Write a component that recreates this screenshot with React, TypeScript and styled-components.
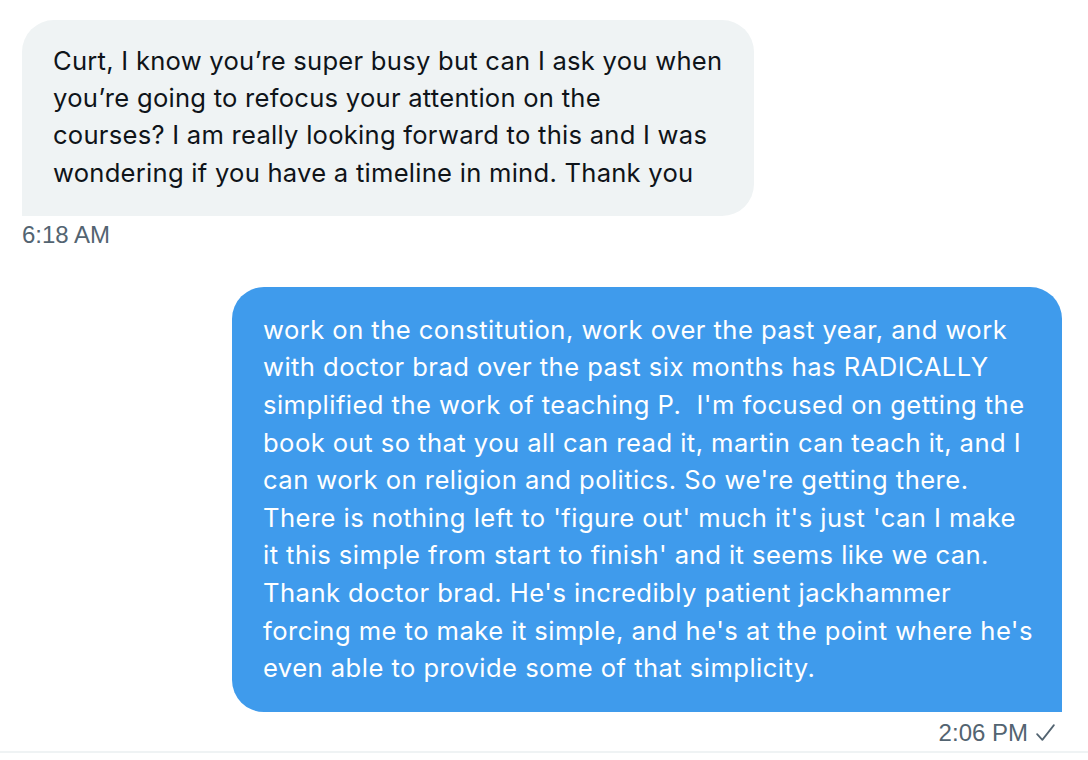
import React from "react";
import styled, { createGlobalStyle } from "styled-components";

const Global = createGlobalStyle`
  html, body { margin: 0; padding: 0; background: #ffffff; }
  body { font-family: "Inter", "Liberation Sans", sans-serif; }
`;

const Page = styled.div`
  width: 1088px;
  height: 760px;
  box-sizing: border-box;
  display: flex;
  flex-direction: column;
  background: #ffffff;
  overflow: hidden;
`;

const Thread = styled.div`
  flex: 1;
  display: flex;
  flex-direction: column;
  padding: 20px 26px 0 22px;
`;

const Group = styled.div<{ $mine?: boolean; $gap?: number }>`
  display: flex;
  flex-direction: column;
  align-items: ${(p) => (p.$mine ? "flex-end" : "flex-start")};
  margin-top: ${(p) => p.$gap ?? 0}px;
`;

const Bubble = styled.div<{ $mine?: boolean; $width: number }>`
  box-sizing: border-box;
  width: ${(p) => p.$width}px;
  padding: ${(p) => (p.$mine ? "24px 16px 25px 31px" : "22px 16px 25px 31px")};
  border-radius: ${(p) => (p.$mine ? "32px 32px 0 32px" : "32px 32px 32px 0")};
  background: ${(p) => (p.$mine ? "#3f9bec" : "#eff3f4")};
  color: ${(p) => (p.$mine ? "#ffffff" : "#0f1419")};
  font-family: "Inter", "Liberation Sans", sans-serif;
  font-size: 25.6px;
  line-height: ${(p) => (p.$mine ? "37.6px" : "37.2px")};
  letter-spacing: ${(p) => (p.$mine ? "0.45px" : "0.25px")};
  white-space: nowrap;
`;

const Meta = styled.div<{ $mine?: boolean }>`
  display: flex;
  align-items: center;
  gap: 7px;
  height: 30px;
  margin-top: ${(p) => (p.$mine ? "6px" : "4px")};
  margin-right: ${(p) => (p.$mine ? "6px" : "0")};
  font-family: "Liberation Sans", Arial, sans-serif;
  font-size: 24px;
  color: #536471;
`;

const Divider = styled.div`
  height: 2px;
  background: #eff3f4;
  margin-bottom: 7px;
`;

const Check = () => (
  <svg width="21" height="21" viewBox="0 0 20 20" fill="none">
    <path d="M2 11.5 L7 17 L18 3" stroke="#536471" strokeWidth="1.7" strokeLinecap="round" strokeLinejoin="round" />
  </svg>
);

const theirs = [
  "Curt, I know you\u2019re super busy but can I ask you when",
  "you\u2019re going to refocus your attention on the",
  "courses? I am really looking forward to this and I was",
  "wondering if you have a timeline in mind. Thank you",
];

const mine = [
  "work on the constitution, work over the past year, and work",
  "with doctor brad over the past six months has RADICALLY",
  "simplified the work of teaching P.\u00a0 I'm focused on getting the",
  "book out so that you all can read it, martin can teach it, and I",
  "can work on religion and politics. So we're getting there.",
  "There is nothing left to 'figure out' much it's just 'can I make",
  "it this simple from start to finish' and it seems like we can.",
  "Thank doctor brad. He's incredibly patient jackhammer",
  "forcing me to make it simple, and he's at the point where he's",
  "even able to provide some of that simplicity.",
];

const Lines = ({ lines }: { lines: string[] }) => (
  <>
    {lines.map((l, i) => (
      <React.Fragment key={i}>
        {l}
        {i < lines.length - 1 && <br />}
      </React.Fragment>
    ))}
  </>
);

export default function App() {
  return (
    <Page>
      <Global />
      <Thread>
        <Group>
          <Bubble $width={732}>
            <Lines lines={theirs} />
          </Bubble>
          <Meta>6:18 AM</Meta>
        </Group>
        <Group $mine $gap={37}>
          <Bubble $mine $width={830}>
            <Lines lines={mine} />
          </Bubble>
          <Meta $mine>
            2:06 PM
            <Check />
          </Meta>
        </Group>
      </Thread>
      <Divider />
    </Page>
  );
}
